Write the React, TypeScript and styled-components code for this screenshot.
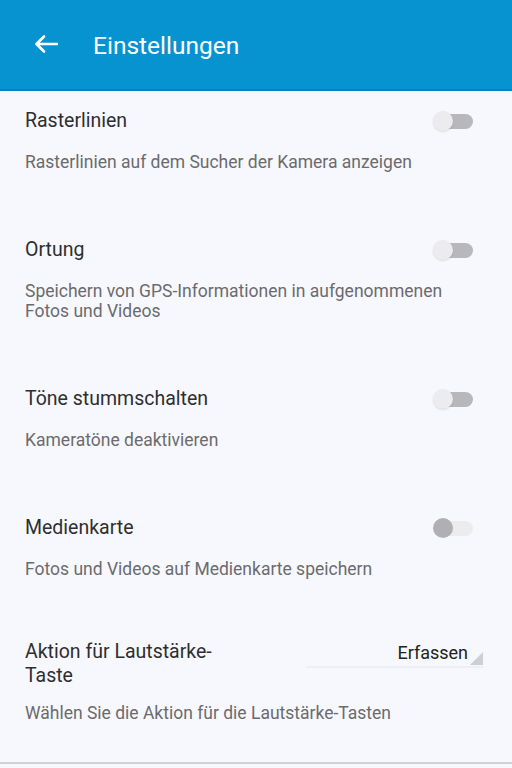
import styled, { createGlobalStyle } from 'styled-components';

const blue = '#0793d0';
const pageBg = '#f7f8fd';

const GlobalStyle = createGlobalStyle`
  html, body {
    margin: 0;
    padding: 0;
    background: ${pageBg};
  }
  body {
    font-family: Roboto, "Noto Sans", "Liberation Sans", sans-serif;
  }
`;

type Item = {
  title: string;
  desc: string;
  control: 'switch' | 'spinner';
  dark?: boolean;
  value?: string;
};

const items: Item[] = [
  { title: 'Rasterlinien', desc: 'Rasterlinien auf dem Sucher der Kamera anzeigen', control: 'switch' },
  { title: 'Ortung', desc: 'Speichern von GPS-Informationen in aufgenommenen Fotos und Videos', control: 'switch' },
  { title: 'Töne stummschalten', desc: 'Kameratöne deaktivieren', control: 'switch' },
  { title: 'Medienkarte', desc: 'Fotos und Videos auf Medienkarte speichern', control: 'switch', dark: true },
  { title: 'Aktion für Lautstärke-Taste', desc: 'Wählen Sie die Aktion für die Lautstärke-Tasten', control: 'spinner', value: 'Erfassen' },
];

const BackArrow = () => (
  <svg width="24" height="18" viewBox="0 0 24 18" fill="none">
    <path d="M23 9H3M10 1.5L2.5 9l7.5 7.5" stroke="#fff" strokeWidth="2.6" strokeLinecap="round" strokeLinejoin="round" />
  </svg>
);

const App = () => {
  return (
    <Screen>
      <GlobalStyle />
      <Toolbar>
        <BackButton>
          <BackArrow />
        </BackButton>
        <Title>Einstellungen</Title>
      </Toolbar>
      <List>
        {items.map((item, i) => (
          <Row key={i} $spinner={item.control === 'spinner'}>
            <Head>
              <ItemTitle $narrow={item.control === 'spinner'}>{item.title}</ItemTitle>
              {item.control === 'switch' ? (
                <Switch>
                  <Track $dark={!!item.dark} />
                  <Thumb $dark={!!item.dark} />
                </Switch>
              ) : (
                <Spinner>
                  <SpinnerText>{item.value}</SpinnerText>
                  <Corner />
                </Spinner>
              )}
            </Head>
            <Desc $spinner={item.control === 'spinner'}>{item.desc}</Desc>
          </Row>
        ))}
      </List>
      <BottomLine />
    </Screen>
  );
};
export default App;

const Screen = styled.div`
  width: 512px;
  height: 768px;
  display: flex;
  flex-direction: column;
  background: ${pageBg};
  overflow: hidden;
`;

const Toolbar = styled.header`
  height: 91px;
  flex-shrink: 0;
  display: flex;
  align-items: center;
  background: ${blue};
  border-bottom: 2px solid #0585bf;
  padding-left: 34px;
  box-sizing: border-box;
`;

const BackButton = styled.div`
  width: 24px;
  height: 18px;
  display: flex;
  margin-right: 35px;
  margin-top: -1px;
`;

const Title = styled.h1`
  margin: 2px 0 0;
  color: #fff;
  font-size: 24.5px;
  font-weight: 400;
`;

const List = styled.div`
  flex: 1;
  display: flex;
  flex-direction: column;
`;

const Row = styled.div<{ $spinner: boolean }>`
  padding: ${(p) => (p.$spinner ? '12px' : '17px')} 30px ${(p) => (p.$spinner ? '0' : '49px')} 25px;
  &:first-child {
    padding-top: 18px;
  }
`;

const Head = styled.div`
  display: flex;
  align-items: flex-start;
  justify-content: space-between;
`;

const ItemTitle = styled.div<{ $narrow: boolean }>`
  font-size: 19.5px;
  line-height: 24px;
  color: #2e2e30;
  max-width: ${(p) => (p.$narrow ? '205px' : 'none')};
`;

const Desc = styled.div<{ $spinner: boolean }>`
  margin-top: ${(p) => (p.$spinner ? '15px' : '19px')};
  font-size: 17.5px;
  line-height: 20px;
  color: #6b6b6e;
  max-width: 440px;
`;

const Switch = styled.div`
  position: relative;
  width: 42px;
  height: 24px;
  margin-right: 9px;
  flex-shrink: 0;
`;

const Track = styled.div<{ $dark: boolean }>`
  position: absolute;
  left: 8px;
  right: 0;
  top: 5px;
  height: 15px;
  border-radius: 8px;
  background: ${(p) => (p.$dark ? '#ececef' : '#b8b8bc')};
`;

const Thumb = styled.div<{ $dark: boolean }>`
  position: absolute;
  left: 2px;
  top: 2px;
  width: 20px;
  height: 20px;
  border-radius: 50%;
  background: ${(p) => (p.$dark ? '#b0b0b3' : '#ececee')};
  box-shadow: ${(p) => (p.$dark ? 'none' : '0 1px 2px rgba(0,0,0,0.12)')};
`;

const Spinner = styled.div`
  position: relative;
  width: 177px;
  height: 29px;
  margin-left: auto;
  margin-top: -2px;
  margin-right: -1px;
  display: flex;
  justify-content: flex-end;
  align-items: center;
  padding-right: 15px;
  box-sizing: border-box;
  border-bottom: 1px solid rgba(0, 0, 0, 0.04);
  box-shadow: 0 1px 1px rgba(0, 0, 0, 0.03);
`;

const SpinnerText = styled.span`
  font-size: 18px;
  color: #222;
`;

const Corner = styled.div`
  position: absolute;
  right: 0;
  bottom: 1px;
  width: 0;
  height: 0;
  border-left: 13px solid transparent;
  border-bottom: 13px solid #cfcfd3;
`;

const BottomLine = styled.div`
  height: 2px;
  background: #d2d2d6;
  margin-bottom: 4px;
  flex-shrink: 0;
`;
